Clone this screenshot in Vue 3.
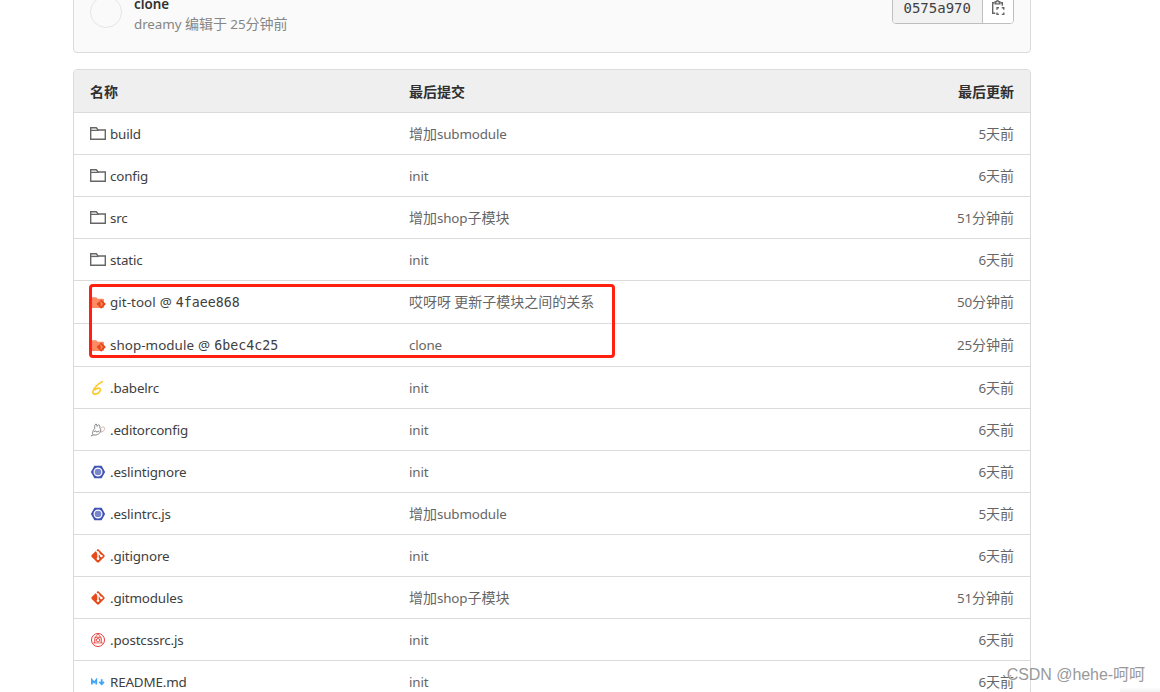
<script setup>
const GIT_PATH =
  "M2.6 10.59L8.38 4.8l1.69 1.7c-.24.85.15 1.78.93 2.23v5.54c-.6.34-1 .99-1 1.73a2 2 0 0 0 2 2 2 2 0 0 0 2-2c0-.74-.4-1.39-1-1.73V9.41l2.07 2.09c-.07.15-.07.32-.07.5a2 2 0 0 0 2 2 2 2 0 0 0 2-2 2 2 0 0 0-2-2c-.18 0-.35 0-.5.07L13.93 7.5a1.98 1.98 0 0 0-1.15-2.34c-.43-.16-.88-.2-1.28-.09L9.8 3.38l.79-.78c.78-.79 2.04-.79 2.82 0l7.99 7.99c.79.78.79 2.04 0 2.82l-7.99 7.99c-.78.79-2.04.79-2.82 0L2.6 13.41c-.79-.78-.79-2.04 0-2.82z";

const files = [
  { icon: "folder", name: "build", commit: "增加submodule", time: "5天前" },
  { icon: "folder", name: "config", commit: "init", time: "6天前" },
  { icon: "folder", name: "src", commit: "增加shop子模块", time: "51分钟前" },
  { icon: "folder", name: "static", commit: "init", time: "6天前" },
  { icon: "submodule", name: "git-tool", sha: "4faee868", commit: "哎呀呀 更新子模块之间的关系", time: "50分钟前" },
  { icon: "submodule", name: "shop-module", sha: "6bec4c25", commit: "clone", time: "25分钟前" },
  { icon: "babel", name: ".babelrc", commit: "init", time: "6天前" },
  { icon: "editorconfig", name: ".editorconfig", commit: "init", time: "6天前" },
  { icon: "eslint", name: ".eslintignore", commit: "init", time: "6天前" },
  { icon: "eslint", name: ".eslintrc.js", commit: "增加submodule", time: "5天前" },
  { icon: "git", name: ".gitignore", commit: "init", time: "6天前" },
  { icon: "git", name: ".gitmodules", commit: "增加shop子模块", time: "51分钟前" },
  { icon: "postcss", name: ".postcssrc.js", commit: "init", time: "6天前" },
  { icon: "markdown", name: "README.md", commit: "init", time: "6天前" },
];

// latin runs are set slightly smaller than the chinese around them
const runs = (text) =>
  text.match(/[\x20-\x7e]+|[^\x20-\x7e]+/g).map((part) => ({
    part,
    latin: /^[\x20-\x7e]/.test(part),
  }));
</script>

<template>
  <div class="page">
    <div class="commit-card">
      <div class="avatar"></div>
      <div class="commit-info">
        <div class="commit-title">clone</div>
        <div class="commit-meta">
          <span v-for="(r, i) in runs('dreamy 编辑于 25分钟前')" :key="i" :class="{ latin: r.latin }">{{ r.part }}</span>
        </div>
      </div>
      <div class="sha-group">
        <span class="sha-label">0575a970</span>
        <button class="copy-btn" title="Copy commit SHA">
          <svg width="16" height="16" viewBox="0 0 16 16" fill="none" stroke="#666" stroke-width="1.4">
            <path d="M4.6 2.7H2.7v10.6h2.6M10.4 2.7h1.9v3" />
            <path d="M5.2 3.9V1.8h1.2a1.1 1.1 0 0 1 2.2 0h1.2v2.1z" />
            <path d="M7 9.8V7.8h2M11.8 7.8h2v2M13.8 12.4v2h-2M9 14.4H7v-2" />
          </svg>
        </button>
      </div>
    </div>

    <div class="tree">
      <div class="tree-row tree-head">
        <div>名称</div>
        <div>最后提交</div>
        <div class="time">最后更新</div>
      </div>
      <div v-for="file in files" :key="file.name" class="tree-row" :class="{ 'is-submodule': file.sha }">
        <div class="name">
          <svg class="icon" width="16" height="16" viewBox="0 0 16 16" fill="none">
            <g v-if="file.icon === 'folder'" stroke="#666" stroke-width="1.4">
              <path d="M.7 13.3V1.8h5.6l1.8 2.2h7.2v9.3z" />
              <path d="M.7 4.4h8" />
            </g>
            <g v-else-if="file.icon === 'submodule'">
              <path d="M1 3.2Q1 2.3 2 2.3h4.2l1.4 1.5H13q1 0 1 1v7.3q0 1-1 1H2q-1 0-1-1z" fill="#ff8a65" />
              <path d="M11.2 4.4 15.9 9.1 11.2 13.8 6.5 9.1z" fill="#e64a19" />
              <path d="m9.8 6.3 1.4 1.4v3.6M11.2 7.8l1.7 1.5" stroke="#ffab91" stroke-width=".8" />
            </g>
            <g v-else-if="file.icon === 'babel'" stroke-width="1.7" stroke-linecap="round">
              <path d="M12.2 1.7C8 3.6 3.2 8.5 2.8 12c-.2 3.2 5.5 2.7 7.2-.8 1.5-3.3-1.8-4.1-5-1.4" stroke="#fdc92f" />
            </g>
            <g v-else-if="file.icon === 'editorconfig'" stroke="#777" stroke-width=".9">
              <path d="M4.7 6.5C4.3 4 5.2 1.8 6.2 2l1 2.3C8.6 2 10 2.5 9.8 5.5l1 2.2c0 3.5-3.3 5.8-7.2 5.3C1.8 12.6 2.2 9 4.7 6.5z" />
              <path d="m3.6 9.8 2.2-1 .8 1.3 2.8-1.2M.9 14l2.4-1.2" />
              <path d="M11 5.8c2-1.6 4-.8 3.6 1.2-.3 2-2.2 2.7-3.7 3" stroke="#d4aaaa" />
            </g>
            <g v-else-if="file.icon === 'eslint'">
              <path d="M4.4 1.7h7.2L15.1 8l-3.5 6.3H4.4L.9 8z" fill="#3f51b5" />
              <circle cx="8" cy="8" r="3.9" fill="#7986cb" stroke="#fff" stroke-width="1.2" />
            </g>
            <g v-else-if="file.icon === 'git'" transform="scale(.6667)">
              <path :d="GIT_PATH" fill="#e64a19" />
            </g>
            <g v-else-if="file.icon === 'postcss'" stroke="#e53935">
              <circle cx="8" cy="8" r="6.5" stroke-width="1" />
              <path d="M8 1.8 5 5.6M8 1.8l3 3.8M2.8 11h10.4" stroke-width=".7" />
              <path d="M4.8 11V6.2q0-1 1-1h4.4q1 0 1 1V11" stroke-width="1" />
              <circle cx="8" cy="8.2" r="1.7" stroke-width=".9" />
            </g>
            <g v-else stroke="#42a5f5" stroke-width="1.8">
              <path d="M1.9 10.5V6l2.2 2.5L6.3 6v4.5" />
              <path d="M11.7 5.3v4M9.4 7.9l2.3 2.3L14 7.9" />
            </g>
          </svg>
          <span class="latin">{{ file.name }}</span>
          <span v-if="file.sha" class="latin at">@</span>
          <span v-if="file.sha" class="sha">{{ file.sha }}</span>
        </div>
        <div class="commit">
          <span v-for="(r, i) in runs(file.commit)" :key="i" :class="{ latin: r.latin }">{{ r.part }}</span>
        </div>
        <div class="time">
          <span v-for="(r, i) in runs(file.time)" :key="i" :class="{ latin: r.latin }">{{ r.part }}</span>
        </div>
      </div>
    </div>

    <div class="highlight"></div>
    <div class="watermark">CSDN @hehe-呵呵</div>
    <div class="corner-shadow"></div>
  </div>
</template>

<style>
body {
  margin: 0;
  overflow: hidden;
  background: #fff;
}
</style>

<style scoped>
.page {
  position: relative;
  box-sizing: border-box;
  height: 692px;
  padding: 0 129px 0 73px;
  overflow: hidden;
  font-family: "Noto Sans", "Noto Sans CJK SC", sans-serif;
  font-size: 14px;
  line-height: 20px;
  color: #404040;
}

.latin {
  font-size: 13.4px;
  letter-spacing: -0.16px;
  white-space: pre;
}

.commit-card {
  box-sizing: border-box;
  display: flex;
  height: 69px;
  margin-top: -16px;
  margin-bottom: 16px;
  padding: 11px 16px;
  border: 1px solid #dbdbdb;
  border-radius: 4px;
  background: #fafafa;
}

.avatar {
  box-sizing: border-box;
  width: 32px;
  height: 32px;
  margin-right: 12px;
  border: 1px solid #e6e6e6;
  border-radius: 50%;
}

.commit-info {
  flex: 1;
  margin-top: -2px;
}

.commit-title {
  font-size: 13.4px;
  font-weight: 600;
  color: #303030;
}

.commit-meta {
  color: #868686;
}

.commit-meta .latin {
  letter-spacing: -0.07px;
}

.sha-group {
  box-sizing: border-box;
  display: flex;
  width: 122px;
  height: 32px;
  margin-top: -4px;
  border: 1px solid #bfbfbf;
  border-radius: 4px;
  overflow: hidden;
  background: #fff;
}

.sha-label {
  flex: 1;
  padding-left: 10.5px;
  border-right: 1px solid #bfbfbf;
  background: #f2f2f2;
  font-family: "DejaVu Sans Mono", monospace;
  line-height: 30px;
}

.copy-btn {
  display: flex;
  align-items: center;
  justify-content: center;
  width: 30px;
  padding: 0;
  border: none;
  background: #fff;
}

.tree {
  border: 1px solid #dbdbdb;
  border-radius: 4px;
  overflow: hidden;
}

.tree-row {
  box-sizing: border-box;
  display: grid;
  grid-template-columns: 319px 1fr 120px;
  align-items: center;
  height: 42px;
  padding: 0 16px;
  border-bottom: 1px solid #dbdbdb;
}

.tree-row.is-submodule {
  height: 43px;
}

.tree-row.tree-head {
  height: 43px;
  padding-top: 2px;
  background: #efefef;
  font-weight: 600;
  color: #303030;
}

.name {
  display: flex;
  align-items: center;
}

.icon {
  flex: none;
  margin-right: 4px;
}

.is-submodule .icon {
  position: relative;
  top: 1px;
}

.is-submodule .name .latin {
  letter-spacing: 0.05px;
}

.at {
  margin: 0 4px;
}

.sha {
  padding-top: 2px;
  font-family: "DejaVu Sans Mono", monospace;
  font-size: 13.3px;
}

.commit,
.time {
  color: #666;
}

.time {
  text-align: right;
}

.tree-head .time {
  color: #303030;
}

.highlight {
  position: absolute;
  left: 89px;
  top: 284px;
  box-sizing: border-box;
  width: 526px;
  height: 74px;
  border: 3px solid #ff2010;
  border-radius: 4px;
}

.watermark {
  position: absolute;
  right: 15px;
  top: 664px;
  font-family: "Liberation Sans", "Noto Sans CJK SC", sans-serif;
  font-size: 16px;
  line-height: 22px;
  letter-spacing: -0.05px;
  color: #999;
  text-shadow: 1px 1px 0 #fff;
}

.corner-shadow {
  position: absolute;
  right: 0;
  bottom: 0;
  width: 40px;
  height: 5px;
  background: linear-gradient(to bottom, #fff0, #0000000d);
}
</style>
